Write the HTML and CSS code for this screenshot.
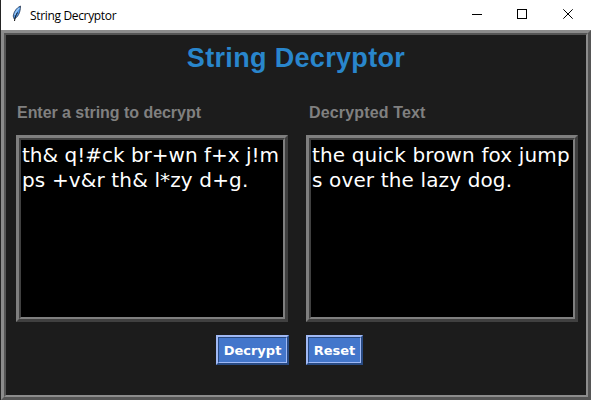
FILE: index.html
```html
<!DOCTYPE html>
<html lang="en">
<head>
<meta charset="utf-8">
<title>String Decryptor</title>
<link rel="stylesheet" href="styles.css">
</head>
<body>
<div class="window">
  <header class="titlebar">
    <svg class="feather" width="10" height="18" viewBox="0 0 10 18">
      <path d="M8.500 1C5 2.500 2 6 1.200 11L2.200 14C5.500 12.500 8.500 8 8.500 1Z" fill="#4c94e6" stroke="#26364f" stroke-width=".8"/>
      <path d="M7.200 3C5 5 3.500 7.500 2.800 10" fill="none" stroke="#9cc9f5" stroke-width="1.500"/>
      <path d="M5.500 7.500C4 10 3 12 2.500 16" fill="none" stroke="#111" stroke-width="1"/>
    </svg>
    <span class="caption">String Decryptor</span>
    <svg class="controls" width="138" height="30" viewBox="0 0 138 30" fill="none" stroke="#000" stroke-width="1">
      <path d="M19 14.500H29"/>
      <rect x="64.500" y="9.500" width="9" height="9"/>
      <path d="M110.300 9.300L119.700 18.700M119.700 9.300L110.300 18.700"/>
    </svg>
  </header>
  <main class="frame groove">
    <h1 class="heading">String Decryptor</h1>
    <div class="columns">
      <section class="column">
        <h2 class="label label-input">Enter a string to decrypt</h2>
        <div class="textbox groove"><span>th&amp; q!#ck br+wn f+x j!m</span><br><span class="wide">ps +v&amp;r th&amp; l*zy d+g.</span></div>
        <button class="button decrypt"><span>Decrypt</span></button>
      </section>
      <section class="column">
        <h2 class="label">Decrypted Text</h2>
        <div class="textbox groove"><span class="wide">the quick brown fox jump</span><br><span class="wide">s over the lazy dog.</span></div>
        <button class="button reset"><span>Reset</span></button>
      </section>
    </div>
  </main>
</div>
</body>
</html>
```
FILE: styles.css
```css
* { box-sizing: border-box; }
body { margin: 0; background: #242424; overflow: hidden; }
.window { width: 590px; height: 400px; margin-left: 1px; display: flex; flex-direction: column; }
.titlebar { height: 30px; background: #fff; display: flex; align-items: center; padding-left: 11px; }
.feather { margin-top: -2px; }
.caption { font: 12px/16px "Open Sans", sans-serif; color: #000; margin: 1px 0 0 8px; letter-spacing: -.34px; }
.controls { margin-left: auto; }
.groove { border: 3px solid; position: relative; }
.frame {
  flex: 1; background: #1c1c1c;
  border-color: #8c8c8c #555 #555 #8c8c8c;
  padding: 2px;
}
.frame::before, .textbox::before { content: ""; position: absolute; inset: 0; border: 2px solid; pointer-events: none; }
.frame::before { border-color: #555 #8c8c8c #8c8c8c #555; }
.heading { margin: 8px 0 0; text-align: center; font: bold 27px/31px "Liberation Sans", sans-serif; letter-spacing: .33px; color: #2986cc; }
.columns { display: flex; gap: 18px; padding: 29px 0 0 10px; }
.column { width: 272px; display: flex; flex-direction: column; }
.label { margin: 0 0 0 3px; height: 32px; font: bold 16px/20px "Liberation Sans", sans-serif; letter-spacing: .15px; color: #808080; }
.label-input { margin-left: 1px; letter-spacing: -.04px; }
.textbox {
  height: 187px; background: #000; color: #fff; padding: 5px 3px 3px;
  border-color: #7f7f7f #404040 #404040 #7f7f7f;
  font: 20px/25px "DejaVu Sans", sans-serif; white-space: nowrap;
}
.textbox::before { border-color: #404040 #7f7f7f #7f7f7f #404040; }
.wide { letter-spacing: .14px; }
.button {
  height: 30px; margin: 13px 0 0; padding: 1px 0 0; position: relative;
  border: 2px solid; border-color: #a0b9f5 #284a82 #284a82 #a0b9f5;
  background: #4376cb; color: #fff; font: bold 13px/18px "DejaVu Sans", sans-serif;
}
.button::before { content: ""; position: absolute; inset: 0; border: 1px solid; border-color: #284a82 #a0b9f5 #a0b9f5 #284a82; }
.decrypt { width: 73px; margin-left: 200px; }
.reset { width: 57px; }
```
